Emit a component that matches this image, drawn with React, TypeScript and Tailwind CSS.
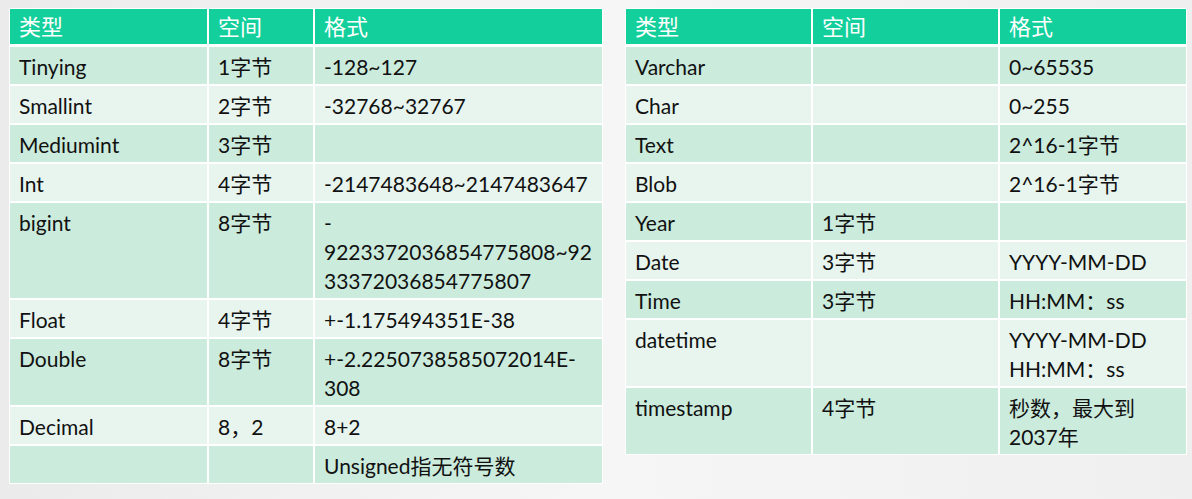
const leftRows: React.ReactNode[][] = [
  ["Tinying", "1字节", "-128~127"],
  ["Smallint", "2字节", "-32768~32767"],
  ["Mediumint", "3字节", ""],
  ["Int", "4字节", "-2147483648~2147483647"],
  [
    "bigint",
    "8字节",
    <>
      -<br />
      9223372036854775808~92
      <br />
      33372036854775807
    </>,
  ],
  ["Float", "4字节", "+-1.175494351E-38"],
  [
    "Double",
    "8字节",
    <>
      +-2.2250738585072014E-
      <br />
      308
    </>,
  ],
  ["Decimal", "8，2", "8+2"],
  ["", "", "Unsigned指无符号数"],
];

const rightRows: React.ReactNode[][] = [
  ["Varchar", "", "0~65535"],
  ["Char", "", "0~255"],
  ["Text", "", "2^16-1字节"],
  ["Blob", "", "2^16-1字节"],
  ["Year", "1字节", ""],
  ["Date", "3字节", "YYYY-MM-DD"],
  ["Time", "3字节", "HH:MM：ss"],
  [
    "datetime",
    "",
    <>
      YYYY-MM-DD
      <br />
      HH:MM：ss
    </>,
  ],
  [
    "timestamp",
    "4字节",
    <>
      秒数，最大到
      <br />
      2037年
    </>,
  ],
];

function DataTable({ cols, rows }: { cols: string; rows: React.ReactNode[][] }) {
  return (
    <div className="flex flex-col bg-white p-px gap-[2px]">
      <div className={`grid ${cols} gap-[2px] mb-px`}>
        {["类型", "空间", "格式"].map((h) => (
          <div
            key={h}
            className="bg-[#13cf9c] h-[35px] px-[9px] flex items-center text-white text-[22px]"
          >
            {h}
          </div>
        ))}
      </div>
      {rows.map((r, i) => (
        <div key={i} className={`grid ${cols} gap-[2px]`}>
          {r.map((c, j) => (
            <div
              key={j}
              className={`${
                i % 2 === 0 ? "bg-[#cbebdc]" : "bg-[#e7f5ee]"
              } px-[9px] pt-[5px] pb-[3px] leading-[29px] text-[21px] text-[#111] whitespace-nowrap`}
            >
              {c}
            </div>
          ))}
        </div>
      ))}
    </div>
  );
}

export default function App() {
  return (
    <div
      className="w-[1192px] h-[499px] bg-linear-to-r from-[#ebebeb] via-[#f6f6f6] to-[#efefef] flex items-start gap-[22px] pl-[9px] pt-[8px]"
      style={{ fontFamily: 'Lato, "Noto Sans CJK SC", sans-serif' }}
    >
      <DataTable cols="grid-cols-[197px_104px_287px]" rows={leftRows} />
      <DataTable cols="grid-cols-[185px_185px_186px]" rows={rightRows} />
    </div>
  );
}
